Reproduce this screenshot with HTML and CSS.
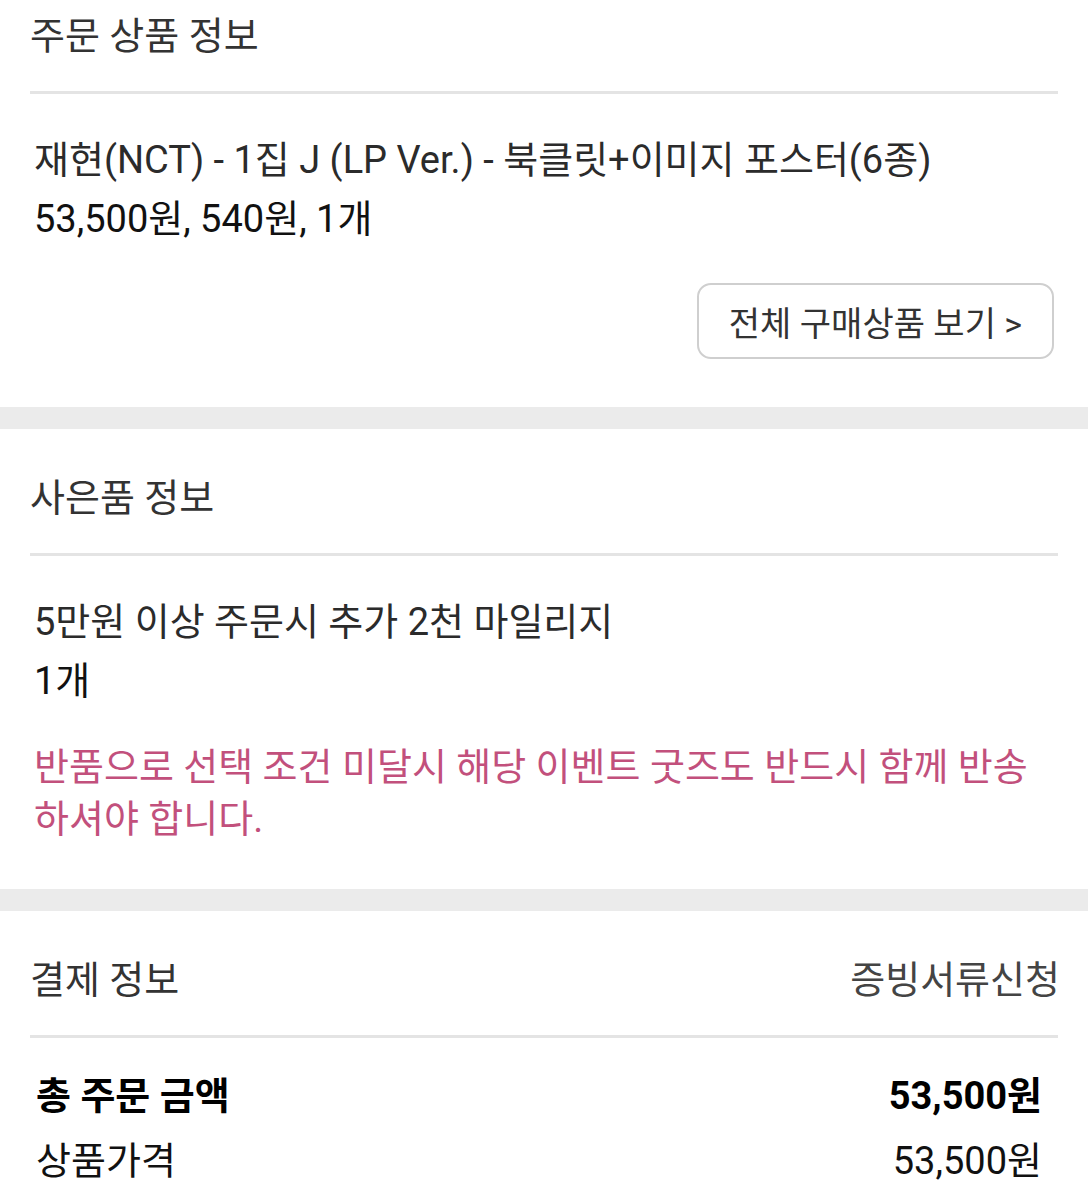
FILE: index.html
```html
<!DOCTYPE html>
<html lang="ko">
<head>
    <meta charset="UTF-8">
    <meta name="viewport" content="width=device-width, initial-scale=1.0">
    <title>주문 상세</title>
    <link rel="stylesheet" href="styles.css">
</head>
<body>
    <div class="pagina">
        <section class="secao">
            <div class="secao-topo">
                <h2>주문 상품 정보</h2>
            </div>
            <div class="produto">
                <p class="produto-nome">재현(NCT) - 1집 J (LP Ver.) - 북클릿+이미지 포스터(6종)</p>
                <p class="produto-preco">53,500원, 540원, 1개</p>
            </div>
            <div class="acoes">
                <button class="btn-ver">전체 구매상품 보기 &gt;</button>
            </div>
        </section>

        <div class="faixa"></div>

        <section class="secao secao-brinde">
            <div class="secao-topo">
                <h2>사은품 정보</h2>
            </div>
            <div class="produto">
                <p class="produto-nome">5만원 이상 주문시 추가 2천 마일리지</p>
                <p class="produto-preco">1개</p>
            </div>
            <p class="aviso">반품으로 선택 조건 미달시 해당 이벤트 굿즈도 반드시 함께 반송 하셔야 합니다.</p>
        </section>

        <div class="faixa"></div>

        <section class="secao">
            <div class="secao-topo">
                <h2>결제 정보</h2>
                <span class="link-doc">증빙서류신청</span>
            </div>
            <div class="linhas">
                <div class="linha linha-total">
                    <span>총 주문 금액</span>
                    <span>53,500원</span>
                </div>
                <div class="linha">
                    <span>상품가격</span>
                    <span>53,500원</span>
                </div>
            </div>
        </section>
    </div>
</body>
</html>
```

FILE: styles.css
```css
body {
    margin: 0;
    font-family: Roboto, "Noto Sans CJK KR", sans-serif;
    background-color: #fff;
    color: #222;
    overflow: hidden;
}
.pagina {
    margin-top: -33px;
}
.secao {
    padding: 0 30px;
}
.secao-topo {
    display: flex;
    justify-content: space-between;
    align-items: center;
    padding: 39px 0 25px;
    line-height: 60px;
    border-bottom: 3px solid #e4e4e4;
}
.secao-topo h2 {
    margin: 0;
    font-size: 38px;
    font-weight: normal;
    color: #333;
}
.link-doc {
    font-size: 38px;
    color: #444;
    margin-right: -2px;
}
.produto {
    margin-top: 37px;
    padding-left: 4px;
}
.produto p {
    margin: 0;
    font-size: 38px;
    line-height: 59px;
}
.produto-nome {
    color: #2b2b2b;
}
.produto-preco {
    color: #111;
}
.acoes {
    display: flex;
    justify-content: flex-end;
    padding: 34px 4px 48px 0;
}
.btn-ver {
    width: 357px;
    height: 76px;
    font-family: inherit;
    font-size: 34px;
    color: #333;
    background-color: #fff;
    border: 2px solid #cfcfcf;
    border-radius: 14px;
    padding: 0;
}
.faixa {
    height: 22px;
    background-color: #ebebeb;
}
.aviso {
    margin: 30px 0 0;
    padding: 0 0 44px 4px;
    font-size: 38px;
    line-height: 52px;
    color: #c2507c;
    word-break: keep-all;
}
.linhas {
    display: flex;
    flex-direction: column;
    gap: 5px;
    padding: 28px 16px 0 6px;
}
.linha {
    display: flex;
    justify-content: space-between;
    font-size: 38px;
    line-height: 60px;
    color: #111;
}
.linha-total {
    font-weight: bold;
    color: #000;
}
```
